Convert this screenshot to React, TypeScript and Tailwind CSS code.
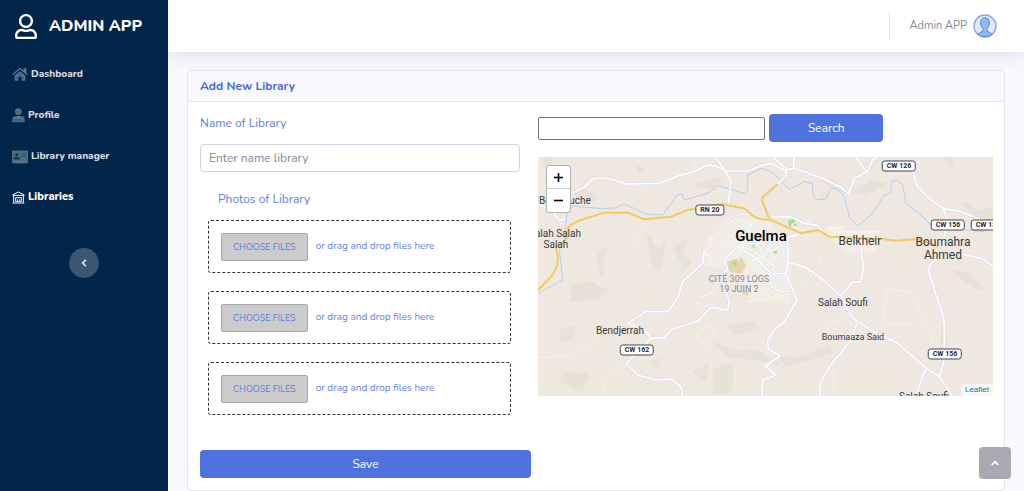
import React, { useState } from 'react';
import { FaAngleLeft, FaAngleUp, FaRegUser } from 'react-icons/fa';

// --- Sidebar icons ---
const HomeIcon = () => (
  <svg className="h-[15px] w-4" viewBox="0 0 48 44" fill="none">
    <path d="M2 22 24 4l22 18M37 14V5h4v13" stroke="#66788a" strokeWidth="4" />
    <path d="M8 25 24 12l16 13v16H29V29H19v12H8z" fill="#5a7186" />
    <path d="M20 20h8v5h-8zM12 27h4v10h-4zM32 27h4v10h-4z" fill="#2a6da3" />
  </svg>
);

const ProfileIcon = () => (
  <svg className="h-[15px] w-[13px]" viewBox="0 0 39 45">
    <circle cx="19" cy="11" r="10" fill="#5c6b79" />
    <path d="M1 43V34q0-9 10-9h16q11 0 11 9v9z" fill="#5a6d7f" />
    <path d="M5 33h29v7H5z" fill="#2c679a" />
    <path d="M15 25h8l-4 8z" fill="#7d8d9b" />
  </svg>
);

const CardIcon = () => (
  <svg className="h-[14px] w-4" viewBox="0 0 50 42">
    <rect width="50" height="40" y="1" rx="4" fill="#51687d" />
    <circle cx="15" cy="14" r="5" fill="#17344f" />
    <path d="M5 29v-2q0-6 6-6h8q6 0 6 6v2z" fill="#17344f" />
    <path d="M29 9h15v4H29zM29 17h15v4H29z" fill="#2b557a" />
    <path d="M5 35h40" stroke="#7c8b9a" strokeWidth="3" strokeDasharray="4 3" />
    <path d="M29 27h14" stroke="#377bac" strokeWidth="3" />
  </svg>
);

const LibraryIcon = () => (
  <svg className="h-[13px] w-[13px]" viewBox="0 0 39 39" fill="none" stroke="#fff" strokeWidth="3">
    <path d="M2 12 19 3l18 9M2 13h35M5 15v20M34 15v20M2 36h35M11 31V20h17v11z" />
    <path d="M17 30v-6M23 30v-6" strokeWidth="2" />
  </svg>
);

const Avatar = () => (
  <svg className="h-6 w-6" viewBox="0 0 72 72">
    <circle cx="36" cy="36" r="33" fill="#e3e9f5" stroke="#7fa9ea" strokeWidth="4" />
    <path
      d="M15 61q3-6 15-9v-8q-6-6-7-14-2-18 13-19 15 1 13 19-1 8-7 14v8q12 3 15 9-9 7-21 7t-21-7z"
      fill="#93b9ee"
      stroke="#5689db"
      strokeWidth="3"
    />
  </svg>
);

const navItems = [
  { name: 'Dashboard', icon: HomeIcon },
  { name: 'Profile', icon: ProfileIcon },
  { name: 'Library manager', icon: CardIcon },
  { name: 'Libraries', icon: LibraryIcon },
];

// --- Map data ---
const roads = [
  'M99 109 139 91 164 66Q174 60 219 66L264 81 364 79 419 57 469 44 500 28Q519 20 540 30L564 42 629 42 669 26 699 19 739 39 769 34 819 51 859 67 909 91 931 109 949 64 989 44 1004 9 1019 0',
  'M534 2 559 39 579 72 571 139',
  'M954 0 987 46',
  'M706 2 744 34 744 54 719 82M769 0 766 34',
  'M1124 41 1139 89 1179 129 1216 154 1269 164 1319 184 1369 204M1216 154 1227 190 1214 269',
  'M499 279 494 319 434 374 419 424 389 464 324 464 269 499 319 519 339 544 279 604 266 621 299 654 354 669 399 666 429 689 434 717',
  'M339 544 379 541 399 519 479 492 519 451 569 459 574 434 559 389 554 359 569 334 559 309 589 279',
  'M749 319 744 349 777 429 739 494 709 519 689 549 691 577 727 597 681 627 714 654 674 669 672 717',
  'M600 269 649 299 700 350 744 349M749 317Q799 322 849 364L909 417 944 484 999 519 1079 559 1159 629 1204 659 1244 717',
  'M909 417 943 375 969 374 977 329 969 279 969 240',
  'M957 497 939 549 874 629 847 679 845 717',
  'M1164 634 1137 704',
  'M1209 299Q1164 320 1174 350L1204 444Q1219 480 1219 509V609L1204 659',
  'M1269 291 1329 304 1369 329',
  'M789 229 749 241 749 319',
  'M0 140 40 160 64 190 80 185M700 180 760 180 800 200 840 205 850 219',
];

const highways = [
  'M0 399 39 359Q62 330 59 300L54 269 84 249 90 215Q95 201 129 189L199 167 269 167 319 187 399 179 449 159 549 141 619 154Q650 184 669 187L699 189 789 229 839 219 874 239 909 241 1034 246 1074 251 1139 246 1199 269',
  'M719 82 676 118Q668 128 679 147L694 187',
];

const rivers =
  'M104 147 189 155 230 153 259 141 324 171 374 174 419 112 434 112 439 129 509 109 539 86 619 109 629 100 629 54 669 34 699 44 754 97 799 74 824 79 824 110 834 127 864 127 879 94Q900 90 919 119L934 179 959 207 999 174 1039 114 1057 109 1061 72 1075 70 1094 84 1104 139 1149 174 1184 209 1339 224M104 147 87 169 79 249 64 279 74 369 0 409';

const streets =
  'M545 205 590 175 650 170 690 200 720 240 750 330M500 300 520 260 560 270 590 240 560 210 540 225 560 270M590 240 630 230 660 260 700 250M600 290 620 260 660 260 680 300 720 340M640 190 630 230 600 290 560 300M660 200 700 250 680 300 640 310M500 260 530 290 490 300M570 185 610 210 650 200 690 230M580 220 620 260 600 310M610 210 660 240 700 290M560 250 640 280 700 320M530 250 580 290M650 330 700 320 744 349 770 310M630 380 690 360 744 349M650 410 720 385 749 360M630 435 690 425 760 390M690 360 710 400 760 405M700 320 725 380M740 240 715 270 735 310M720 235 690 270 715 315M760 205 800 220 820 195 780 190 760 205M485 420 520 410 545 365M480 435 490 450 530 440M640 300 680 340 720 350M670 280 660 310 690 340M540 320 570 345M500 320 540 330 555 300';

const tracks =
  'M0 602 90 597 140 570 210 515 270 499M340 200 310 230 285 265M350 145 310 200M242 622 245 550 270 535M266 621 205 660 195 700 210 717M475 530 520 505 530 540 510 565 475 550 475 530M1048 397 1120 405 1150 470 1190 575M1048 397 1035 500 1130 500M825 543 870 520 880 500 935 475M795 390 830 340 850 300M885 640 890 717M468 0 470 40';

const terrain = [
  'M20 10 42 0 30 50zM110 110 140 100 180 125 130 130zM300 30 315 35 305 42zM475 85 510 72 550 68 520 90 475 90z',
  'M180 300 200 270 190 350zM340 310 380 260 365 340zM410 275 440 250 430 310zM105 385 160 378 205 400 180 425 100 430zM330 240 360 280 340 300z',
  'M70 520 110 510 100 545 70 550zM340 615 365 605 360 630zM80 650 150 655 130 700 70 670zM470 645 510 625 500 670zM530 640 580 620 580 700 530 710z',
  'M570 510 640 495 660 510 600 530zM530 560 590 585 650 580 720 620 650 605 580 600zM720 600 780 605 870 570 880 585 820 605 750 625z',
  'M840 60 890 75 930 105 880 90zM950 100 1000 75 1045 80 980 112zM1220 0 1245 10 1240 25zM1275 140 1330 165 1369 150 1369 190 1310 175z',
  'M1215 510 1225 560 1210 590zM1250 340 1285 350 1340 400 1310 390 1270 365zM860 110 870 120 855 115zM640 260 680 270 660 290zM440 300 455 315 435 340z',
];

const places = [
  { name: 'Belkhouche', x: 27, y: 44, cls: 'text-[10px] text-[#393b42]' },
  { name: 'Salah Salah', x: 17, y: 77, cls: 'text-[10px] text-[#393b42]' },
  { name: 'Salah', x: 18, y: 88, cls: 'text-[10px] text-[#393b42]' },
  { name: 'Guelma', x: 223, y: 79, cls: 'text-[15px] font-medium text-black' },
  { name: 'Belkheir', x: 322, y: 84, cls: 'text-[12px] text-[#393b42]' },
  { name: 'Boumahra', x: 405, y: 85, cls: 'text-[12px] text-[#393b42]' },
  { name: 'Ahmed', x: 405, y: 98, cls: 'text-[12px] text-[#393b42]' },
  { name: 'CITÉ 309 LOGS', x: 201, y: 122, cls: 'text-[9px] text-[#85889a]' },
  { name: '19 JUIN 2', x: 201, y: 132, cls: 'text-[9px] text-[#85889a]' },
  { name: 'Bendjerrah', x: 82, y: 174, cls: 'text-[10px] text-[#393b42]' },
  { name: 'Salah Soufi', x: 305, y: 146, cls: 'text-[10px] text-[#393b42]' },
  { name: 'Boumaaza Said', x: 315, y: 180, cls: 'text-[9px] text-[#393b42]' },
  { name: 'Salah Soufi', x: 386, y: 240, cls: 'text-[10px] text-[#393b42]' },
];

const shields = [
  { name: 'RN 20', x: 172, y: 53 },
  { name: 'CW 126', x: 361, y: 9 },
  { name: 'CW 156', x: 410, y: 68 },
  { name: 'CW 126', x: 450, y: 68 },
  { name: 'CW 162', x: 99, y: 193 },
  { name: 'CW 156', x: 407, y: 197 },
];

const LibraryMap = () => (
  <div className="relative h-[239px] overflow-hidden bg-[#eee8e0] font-['Roboto',sans-serif]">
    <svg className="absolute top-0 left-0 h-[239px] w-[456px]" viewBox="0 0 1368 717" fill="none" strokeLinejoin="round">
      {terrain.map((d) => (
        <path key={d} d={d} fill="#e4dfd2" stroke="#e4dfd2" strokeWidth="8" opacity="0.6" />
      ))}
      <path d="M500 255 580 180 690 190 760 270 755 440 640 430 570 340 500 320z" fill="#f3eee4" />
      <path d="M860 210 920 205 920 230 1020 220 1020 290 930 290 860 230z" fill="#f2ede3" />
      <path d="M565 315 610 300 625 325 610 350 575 345zM605 405 635 400 630 417z" fill="#e2d5b0" />
      <path d="M750 190 770 187 780 212 752 208zM582 315 597 312 592 330zM640 265 650 265 650 275zM705 285 718 280 715 292z" fill="#a9dc91" />
      <path d={tracks} stroke="#f6f2e8" strokeWidth="3" />
      <path d={rivers} stroke="#b5d0ec" strokeWidth="3" />
      <path d={streets} stroke="#dcdde6" strokeWidth="5" />
      <path d={streets} stroke="#fff" strokeWidth="3" />
      <path d="M875 215 910 212M890 225 1020 225M900 265 1010 260M940 225 945 280M1000 220 1005 280" stroke="#fffdf6" strokeWidth="3" />
      {roads.map((d) => (
        <path key={d} d={d} stroke="#d8dced" strokeWidth="8" />
      ))}
      {roads.map((d) => (
        <path key={d} d={d} stroke="#fff" strokeWidth="5" />
      ))}
      {highways.map((d) => (
        <path key={d} d={d} stroke="#f3cb5c" strokeWidth="6" />
      ))}
    </svg>

    {places.map((p) => (
      <span
        key={`${p.name}-${p.y}`}
        className={`absolute -translate-x-1/2 -translate-y-1/2 leading-3 whitespace-nowrap ${p.cls}`}
        style={{ left: p.x, top: p.y }}
      >
        {p.name}
      </span>
    ))}
    {shields.map((s) => (
      <span
        key={`${s.name}-${s.x}`}
        className="absolute -translate-x-1/2 -translate-y-1/2 rounded-[3px] border border-[#44464c] bg-white px-1 text-[7px] leading-[9px] font-bold whitespace-nowrap text-[#26282c]"
        style={{ left: s.x, top: s.y }}
      >
        {s.name}
      </span>
    ))}

    {/* Zoom control */}
    <div className="absolute top-2 left-2 flex w-[25px] flex-col rounded-[3px] border border-[#b5b2ad] bg-white text-black">
      <button aria-label="Zoom in" className="flex h-[23px] items-center justify-center border-b border-[#ccc]">
        <svg className="h-[9px] w-[9px]" viewBox="0 0 9 9" stroke="currentColor" strokeWidth="1.6">
          <path d="M4.500 0v9M0 4.500h9" />
        </svg>
      </button>
      <button aria-label="Zoom out" className="flex h-[23px] items-center justify-center">
        <svg className="h-[9px] w-[9px]" viewBox="0 0 9 9" stroke="currentColor" strokeWidth="1.6">
          <path d="M0 4.500h9" />
        </svg>
      </button>
    </div>
    <a
      href="#leaflet"
      className="absolute right-0 bottom-0 bg-[#f9f7f5] px-1 font-['Liberation_Sans',sans-serif] text-[8px] leading-3 text-[#0078a8]"
    >
      Leaflet
    </a>
  </div>
);

const DropZone = ({ id }: { id: string }) => (
  <div className="flex h-[53px] items-center gap-2 rounded-[3px] border border-dashed border-[#333] px-3 text-[#6585dd]">
    <label
      htmlFor={id}
      className="cursor-pointer rounded-[2px] border border-[#a6a7ad] bg-[#cbcbcb] px-[11px] text-[9px] leading-[26px] whitespace-nowrap text-[#5d7fe0]"
    >
      CHOOSE FILES
    </label>
    <input id={id} type="file" multiple className="sr-only" />
    <span className="text-[10px]">or drag and drop files here</span>
  </div>
);

// --- Main Page Component ---
export default function App() {
  const [name, setName] = useState('');
  const [search, setSearch] = useState('');

  return (
    <div className="flex min-h-screen bg-[#f8f9fc] font-['Nunito','Open_Sans',sans-serif]">
      {/* Sidebar */}
      <aside className="z-10 w-[168px] shrink-0 bg-[#02264a] text-white">
        <a href="#home" className="flex h-[52px] items-center gap-3 pl-[15px]">
          <FaRegUser className="h-[25px] w-[22px]" />
          <span className="text-[16px] font-extrabold whitespace-nowrap">ADMIN APP</span>
        </a>
        <nav className="flex flex-col pt-[2px]">
          {navItems.map(({ name: label, icon: Icon }) => (
            <a
              key={label}
              href={`#${label}`}
              className={`flex h-[41px] items-center gap-[3px] pl-3 whitespace-nowrap ${
                label === 'Libraries'
                  ? 'text-[11px] font-extrabold text-white'
                  : 'text-[10px] font-extrabold text-[#d5dbe2]'
              }`}
            >
              <Icon />
              <span>{label}</span>
            </a>
          ))}
        </nav>
        <button
          aria-label="Collapse sidebar"
          className="mx-auto mt-[30px] flex h-[30px] w-[30px] items-center justify-center rounded-full bg-[#3b5672] text-[#ccd4dc]"
        >
          <FaAngleLeft className="h-3 w-3" />
        </button>
      </aside>

      <div className="flex min-w-0 flex-1 flex-col">
        {/* Topbar */}
        <header className="flex h-[52px] items-center justify-end bg-white pr-[27px] shadow-[0_2px_20px_rgba(58,59,69,0.15)]">
          <div className="flex h-7 items-center gap-[6px] border-l border-[#e3e6f0] pl-5 text-[#858796]">
            <span className="text-[11px]">Admin APP</span>
            <Avatar />
          </div>
        </header>

        {/* Form card */}
        <main className="pt-[18px] pr-[19px] pl-[19px]">
          <section className="rounded-[4px] border border-[#e3e6f0] bg-white">
            <h1 className="rounded-t-[4px] border-b border-[#e3e6f0] bg-[#f8f9fc] px-3 text-[12px] leading-[30px] font-bold text-[#4669d8]">
              Add New Library
            </h1>
            <form
              className="grid grid-cols-[8fr_11fr] gap-[7px] pt-3 pr-[11px] pb-3 pl-3"
              onSubmit={(e) => e.preventDefault()}
            >
              <div className="flex flex-col">
                <label htmlFor="library-name" className="text-[12px] leading-[18px] text-[#5d7fe0]">
                  Name of Library
                </label>
                <input
                  id="library-name"
                  value={name}
                  onChange={(e) => setName(e.target.value)}
                  placeholder="Enter name library"
                  className="mt-3 mr-[11px] h-7 rounded-[4px] border border-[#d1d3e2] px-2 text-[12px] placeholder:text-[#858796]"
                />
                <fieldset className="mr-5 ml-2">
                  <legend className="pt-[18px] pb-3 pl-[10px] text-[12px] leading-[18px] text-[#5d7fe0]">
                    Photos of Library
                  </legend>
                  <div className="flex flex-col gap-[18px]">
                    <DropZone id="photos-1" />
                    <DropZone id="photos-2" />
                    <DropZone id="photos-3" />
                  </div>
                </fieldset>
                <button type="submit" className="mt-[35px] h-7 rounded-[4px] bg-[#4e73df] text-[12px] text-white">
                  Save
                </button>
              </div>

              <div>
                <div className="flex items-center gap-1 pb-[15px]">
                  <input
                    aria-label="Search location"
                    value={search}
                    onChange={(e) => setSearch(e.target.value)}
                    className="h-[23px] w-1/2 rounded-[2px] border border-[#767676] px-1 text-[12px]"
                  />
                  <button type="button" className="h-7 w-1/4 rounded-[4px] bg-[#4e73df] text-[12px] text-white">
                    Search
                  </button>
                </div>
                <LibraryMap />
              </div>
            </form>
          </section>
        </main>
      </div>

      <a
        href="#top"
        aria-label="Scroll to top"
        className="fixed right-[13px] bottom-3 flex h-8 w-8 items-center justify-center rounded-[4px] bg-[#a9aab1] text-white"
      >
        <FaAngleUp className="h-3 w-3" />
      </a>
    </div>
  );
}
